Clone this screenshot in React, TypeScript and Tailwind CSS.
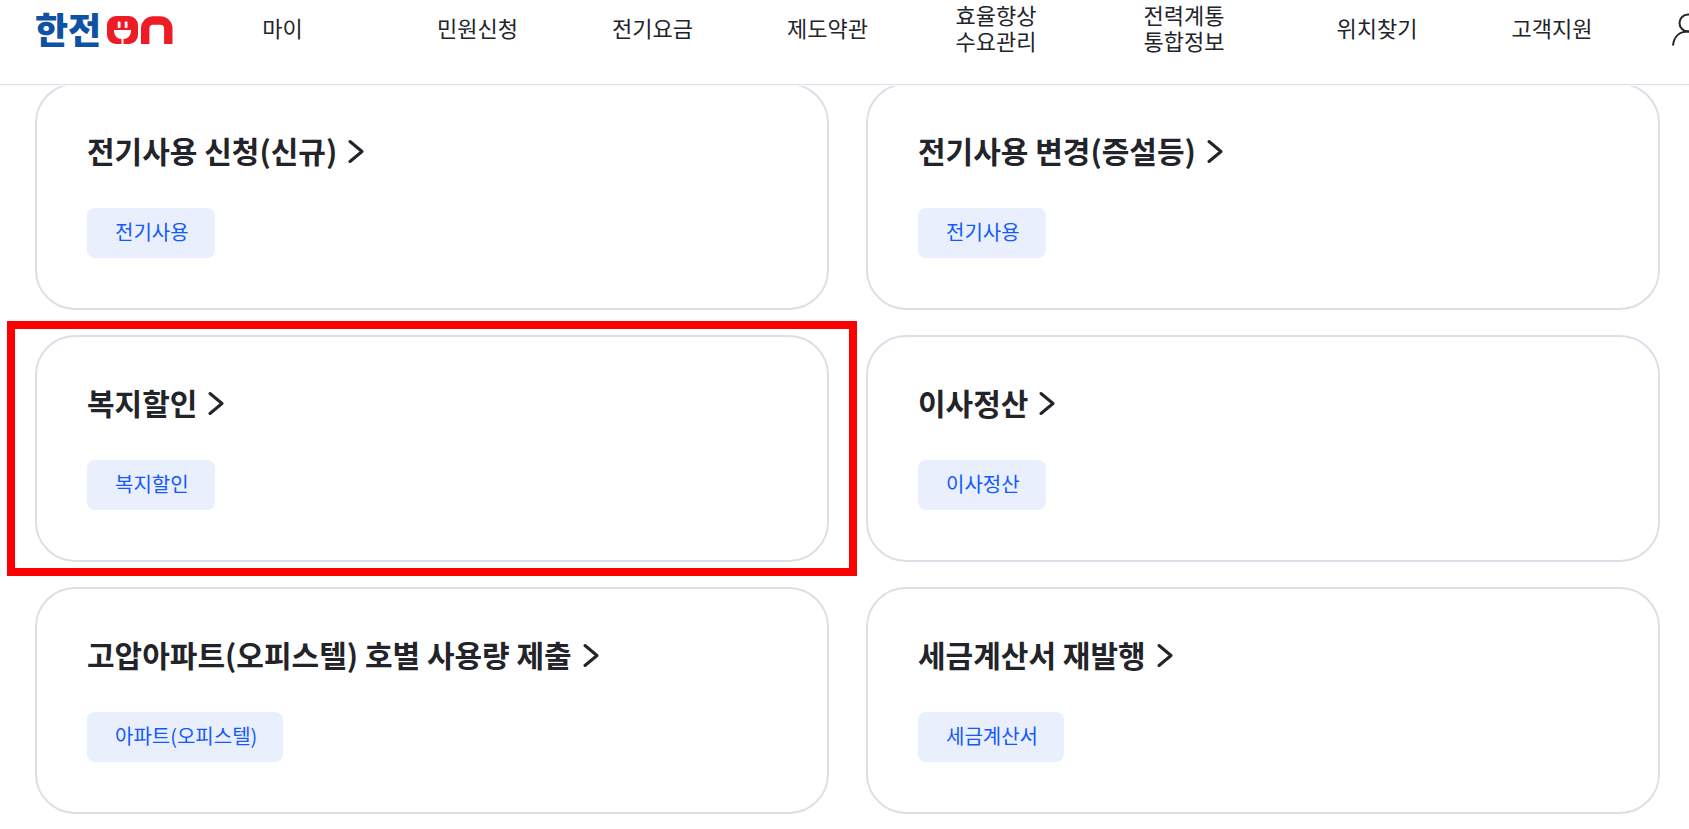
import { Fragment } from "react";

interface Service {
  title: string;
  tag: string;
  highlighted?: boolean;
}

const menu: string[][] = [
  ["마이"],
  ["민원신청"],
  ["전기요금"],
  ["제도약관"],
  ["효율향상", "수요관리"],
  ["전력계통", "통합정보"],
  ["위치찾기"],
  ["고객지원"],
];

const services: Service[] = [
  { title: "전기사용 신청(신규)", tag: "전기사용" },
  { title: "전기사용 변경(증설등)", tag: "전기사용" },
  { title: "복지할인", tag: "복지할인", highlighted: true },
  { title: "이사정산", tag: "이사정산" },
  { title: "고압아파트(오피스텔) 호별 사용량 제출", tag: "아파트(오피스텔)" },
  { title: "세금계산서 재발행", tag: "세금계산서" },
];

function Logo() {
  return (
    <a href="#" className="flex w-[140px] shrink-0 items-center gap-1 pt-1.5">
      <span className="w-[68px] pb-1 text-4xl leading-8 font-black whitespace-nowrap text-[#0f52a5]">한전</span>
      <svg width="66" height="28" viewBox="0 0 66 28" className="shrink-0" aria-hidden="true">
        <rect width="31" height="28" rx="9" fill="#ee1c25" />
        <rect x="10.7" y="5.5" width="2.8" height="6.5" rx="1" fill="#fff" />
        <rect x="17.7" y="5.5" width="2.8" height="6.5" rx="1" fill="#fff" />
        <path d="M7 14H24V15.5A8 7.5 0 0 1 16.5 23V28H14.5V23A8 7.5 0 0 1 7 15.5Z" fill="#fff" />
        <path d="M38.2 28V12.5A8 8 0 0 1 46.2 4.5H53.3A8 8 0 0 1 61.3 12.5V28" fill="none" stroke="#ee1c25" strokeWidth="8.4" />
      </svg>
    </a>
  );
}

function Header() {
  return (
    <header className="sticky top-0 z-10 bg-white pb-px">
      <div className="overflow-hidden border-b border-[#dbe0e8] pb-[30px] pl-[35px]">
        <div className="flex h-[54px] items-center">
          <Logo />
          <nav className="grid flex-1 grid-cols-[215fr_175fr_175fr_175fr_162fr_214fr_172fr_178fr] items-center">
            {menu.map((lines) => (
              <a key={lines[0]} href="#" className="text-center text-[22px] leading-[26px] whitespace-nowrap">
                {lines.map((line, i) => (
                  <Fragment key={line}>
                    {i > 0 && <br />}
                    {line}
                  </Fragment>
                ))}
              </a>
            ))}
          </nav>
          <button type="button" aria-label="로그인" className="w-12 shrink-0 overflow-hidden pl-[31px]">
            <svg width="34" height="38" viewBox="0 0 34 38" fill="none" stroke="currentColor" strokeWidth="2" className="max-w-none">
              <circle cx="16" cy="15" r="8.5" />
              <path d="M1 37.5C2 28 8 23.5 16 23.5S30 28 31 37.5" />
            </svg>
          </button>
        </div>
      </div>
    </header>
  );
}

function ServiceCard({ title, tag, highlighted }: Service) {
  return (
    <article className="relative rounded-[40px] border-2 border-[#dbe0e8] p-[50px]">
      <h2 className="text-[30px] leading-[31px] font-bold">
        <a href="#" className="flex items-center gap-2.5">
          {title}
          <svg
            width="18"
            height="24"
            viewBox="0 0 18 24"
            fill="none"
            stroke="currentColor"
            strokeWidth="3"
            strokeLinecap="round"
            strokeLinejoin="round"
            aria-hidden="true"
          >
            <path d="M3 2.5L15 12.5L3 22.5" />
          </svg>
        </a>
      </h2>
      <span className="mt-[42px] inline-block rounded-lg bg-[#e9effc] pr-[26px] pb-0.5 pl-7 align-top text-xl leading-[48px] text-[#1259ff]">
        {tag}
      </span>
      {highlighted && <div className="pointer-events-none absolute -inset-x-[30px] -inset-y-4 border-8 border-[#ff0000]" />}
    </article>
  );
}

export default function App() {
  return (
    <div className="min-h-screen bg-white font-['Noto_Sans_CJK_KR',sans-serif] text-[#222429]">
      <Header />
      <main className="-mt-[3px] grid grid-cols-2 gap-x-[37px] gap-y-[25px] pr-[29px] pl-[35px]">
        {services.map((service) => (
          <ServiceCard key={service.title} {...service} />
        ))}
      </main>
    </div>
  );
}
